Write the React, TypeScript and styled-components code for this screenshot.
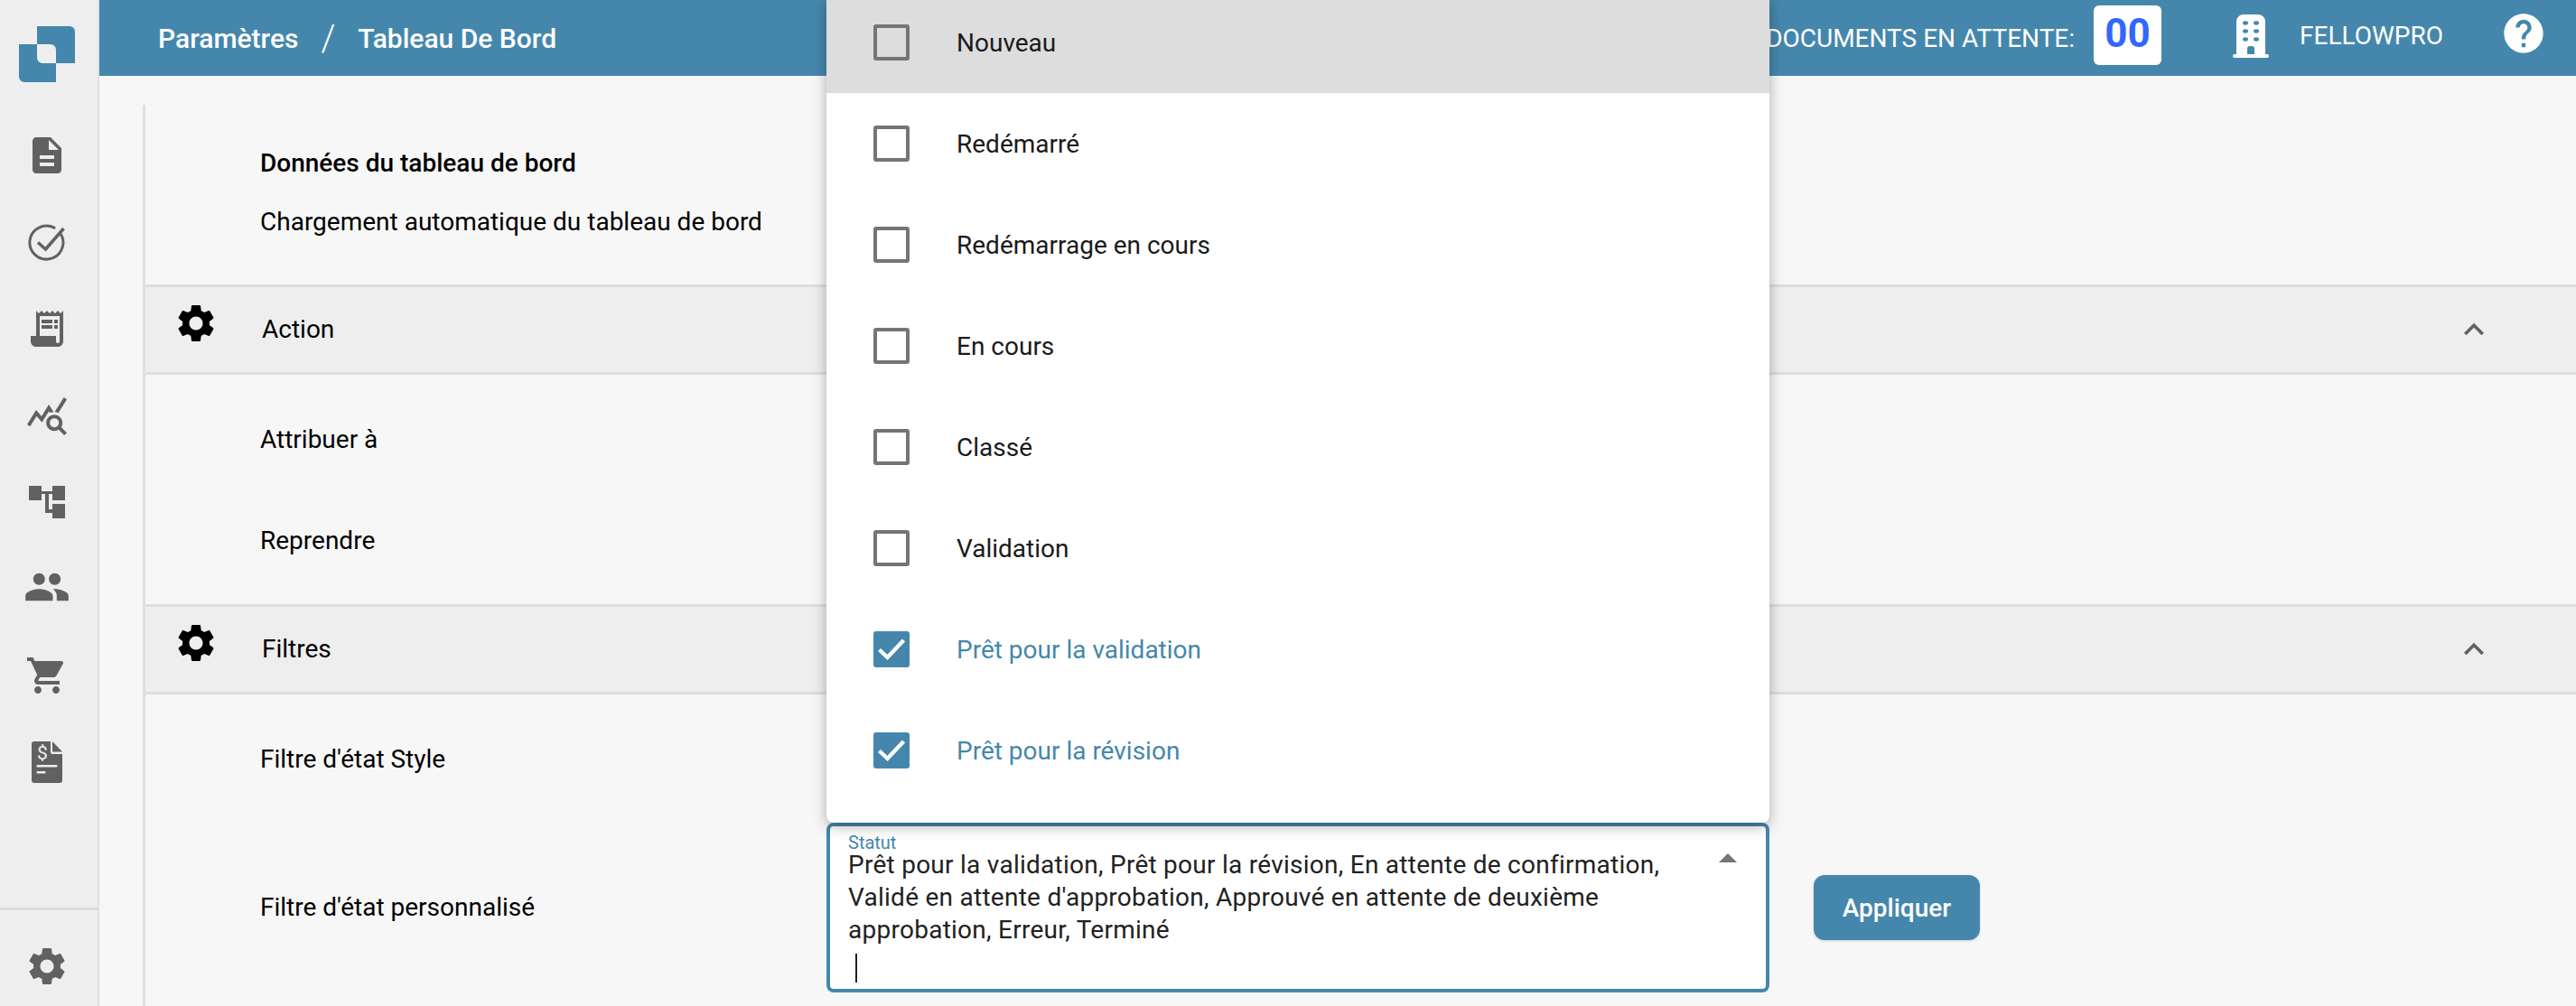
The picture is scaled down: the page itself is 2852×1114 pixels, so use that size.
import React from 'react';
import styled, {createGlobalStyle} from 'styled-components';
import {
    MdDescription,
    MdExpandLess,
    MdHelp,
    MdPeople,
    MdQueryStats,
    MdReceiptLong,
    MdSettings,
    MdShoppingCart,
} from 'react-icons/md';

const GlobalStyle = createGlobalStyle`
    html, body {
        margin: 0;
        padding: 0;
        height: 1114px;
        overflow: hidden;
        background: #f7f7f7;
        font-family: Roboto, "Liberation Sans", sans-serif;
    }
    * {
        box-sizing: border-box;
    }
`;

const Page = styled.div`
    display: flex;
    width: 2852px;
    height: 1114px;
    overflow: hidden;
`;

const Sidebar = styled.aside`
    flex: 0 0 110px;
    display: flex;
    flex-direction: column;
    align-items: center;
    background: #eeeeee;
    border-right: 2px solid #e0e0e0;
`;

const LogoSlot = styled.div`
    flex: 0 0 124px;
    display: flex;
    align-items: flex-start;
    padding-top: 29px;
    padding-right: 4px;
`;

const NavList = styled.nav`
    flex: 1;
    width: 100%;
    display: flex;
    flex-direction: column;
    align-items: center;
    color: #616161;
    padding-right: 4px;
`;

const NavItem = styled.div<{$nudge?: number}>`
    flex: 0 0 96px;
    display: flex;
    align-items: center;
    justify-content: center;
    width: 100%;
    padding-bottom: ${(p) => p.$nudge || 0}px;
`;

const SidebarFoot = styled.div`
    flex: 0 0 109px;
    width: 100%;
    border-top: 3px solid #dcdcdc;
    display: flex;
    align-items: center;
    justify-content: center;
    color: #616161;
    padding: 18px 4px 0 0;
`;

const Main = styled.div`
    flex: 1;
    display: flex;
    flex-direction: column;
    min-width: 0;
`;

const Header = styled.header`
    flex: 0 0 84px;
    display: flex;
    align-items: center;
    background: #4587ac;
    color: #fff;
    padding-left: 65px;
`;

const Crumbs = styled.div`
    display: flex;
    align-items: center;
    font-size: 30px;
    font-weight: 500;
`;

const CrumbSep = styled.span`
    margin: 0 25px;
    font-size: 40px;
    font-weight: 300;
`;

const HeaderRight = styled.div`
    margin-left: auto;
    display: flex;
    align-items: center;
    height: 100%;
`;

const PendingLabel = styled.span`
    font-size: 28px;
    margin-right: 21px;
`;

const PendingBadge = styled.div`
    width: 75px;
    height: 66px;
    margin-top: -6px;
    padding-bottom: 4px;
    background: #fff;
    border-radius: 6px;
    display: flex;
    align-items: center;
    justify-content: center;
    color: #3366ff;
    font-size: 44px;
    font-weight: 700;
`;

const Company = styled.span`
    font-size: 28px;
    margin: -6px 63px 0 34px;
`;

const BuildingSlot = styled.div`
    margin: -4px 0 0 79px;
    display: flex;
`;

const HelpSlot = styled.div`
    display: flex;
    margin-right: 32px;
    margin-top: -11px;
`;

const Content = styled.main`
    flex: 1;
    padding: 32px 0 0 48px;
    min-height: 0;
`;

const Panel = styled.div`
    height: 100%;
    border-left: 3px solid #dedede;
    display: flex;
    flex-direction: column;
`;

const IntroBlock = styled.div`
    flex: 0 0 199px;
    padding: 32px 0 0 127px;
`;

const IntroTitle = styled.div`
    font-size: 28px;
    font-weight: 500;
    line-height: 65px;
    color: #000;
`;

const IntroText = styled.div`
    font-size: 28px;
    line-height: 65px;
    color: #000;
`;

const SectionHead = styled.div`
    flex: 0 0 100px;
    background: #eeeeee;
    border-top: 3px solid #dedede;
    border-bottom: 3px solid #dedede;
    display: flex;
    align-items: center;
    padding: 0 91px 0 31px;
    font-size: 28px;
    color: #000;
`;

const GearSlot = styled.div`
    display: flex;
    margin-top: -14px;
`;

const SectionTitle = styled.span`
    margin-left: 48px;
    margin-top: -2px;
`;

const ChevronSlot = styled.div`
    margin-left: auto;
    display: flex;
    color: #616161;
`;

const RowGroup = styled.div`
    flex: none;
    padding: 15px 0 15px 127px;
    font-size: 28px;
    color: #000;
`;

const FilterRow = styled.div`
    display: flex;
    align-items: center;
    height: 112px;
`;

const CustomFilterRow = styled.div`
    flex: none;
    display: flex;
    align-items: center;
    padding: 0 0 0 127px;
    font-size: 28px;
    color: #000;
`;

const FilterLabel = styled.div`
    width: 627px;
    margin-top: -2px;
`;

const SelectWrap = styled.div`
    position: relative;
    width: 1044px;
`;

const SelectField = styled.div`
    position: relative;
    height: 188px;
    background: #fff;
    border: 4px solid #4587ac;
    border-radius: 8px;
    padding: 11px 60px 0 20px;
`;

const FieldLabel = styled.div`
    font-size: 20px;
    line-height: 14px;
    height: 14px;
    color: #4587ac;
`;

const FieldValue = styled.div`
    font-size: 28px;
    line-height: 36px;
    color: #212121;
    letter-spacing: 0.26px;
`;

const Caret = styled.div`
    width: 2px;
    height: 32px;
    background: #212121;
    margin: 8px 0 0 8px;
`;

const UpArrow = styled.div`
    position: absolute;
    top: 30px;
    right: 32px;
    width: 0;
    height: 0;
    border-left: 10px solid transparent;
    border-right: 10px solid transparent;
    border-bottom: 10px solid #757575;
`;

const Menu = styled.ul`
    position: absolute;
    z-index: 2;
    left: 0;
    right: 0;
    bottom: 100%;
    height: 912px;
    margin: 0;
    padding: 0;
    list-style: none;
    background: #fff;
    border-radius: 0 0 8px 8px;
    box-shadow: 0 4px 16px rgba(0, 0, 0, 0.3);
    overflow: hidden;
`;

const MenuItem = styled.li<{$hover?: boolean; $checked?: boolean}>`
    height: 112px;
    display: flex;
    align-items: center;
    padding-left: 52px;
    font-size: 28px;
    background: ${(p) => (p.$hover ? '#dddddd' : 'transparent')};
    color: ${(p) => (p.$checked ? '#4587ac' : '#1a1a1a')};
    &:first-child {
        height: 104px;
        padding-bottom: 8px;
    }
`;

const CheckBox = styled.span<{$checked?: boolean}>`
    flex: 0 0 40px;
    width: 40px;
    height: 40px;
    margin-right: 52px;
    border-radius: 3px;
    display: flex;
    align-items: center;
    justify-content: center;
    border: ${(p) => (p.$checked ? 'none' : '4px solid #757575')};
    background: ${(p) => (p.$checked ? '#4587ac' : 'transparent')};
`;

const ApplyButton = styled.button`
    margin-left: 49px;
    width: 184px;
    height: 72px;
    border: none;
    border-radius: 12px;
    background: #4587ac;
    color: #fff;
    font-family: inherit;
    font-size: 28px;
    font-weight: 500;
    box-shadow: 0 1px 3px rgba(0, 0, 0, 0.15);
`;

const Logo = () => (
    <svg width="62" height="62" viewBox="0 0 62 62">
        <path
            d="M20 0H56a6 6 0 0 1 6 6V41H41V26a6 6 0 0 0-6-6H20Z"
            fill="#4587ac"
        />
        <path
            d="M0 20H20V35a6 6 0 0 0 6 6H41V62H6a6 6 0 0 1-6-6Z"
            fill="#4587ac"
        />
    </svg>
);

const CheckCircleIcon = () => (
    <svg width="42" height="42" viewBox="0 0 42 42" fill="none" stroke="#616161">
        <path
            d="M36.8 13A18.5 18.5 0 1 1 29 5.2"
            strokeWidth="3"
            strokeLinecap="round"
        />
        <path d="M11 21.5l8.5 7.5L39.5 6" strokeWidth="3.6" />
    </svg>
);

const HierarchyIcon = () => (
    <svg width="40" height="36" viewBox="0 0 40 36" fill="#616161">
        <rect x="0" y="0" width="14" height="16" />
        <rect x="26" y="0" width="14" height="16" />
        <rect x="14" y="6" width="12" height="3" />
        <rect x="18" y="9" width="4" height="21" />
        <rect x="22" y="26" width="4" height="4" />
        <rect x="26" y="20" width="14" height="16" />
    </svg>
);

const InvoiceIcon = () => (
    <svg width="34" height="46" viewBox="0 0 34 46">
        <path
            d="M3 0H21V12a2 2 0 0 0 2 2H34V43a3 3 0 0 1-3 3H3a3 3 0 0 1-3-3V3a3 3 0 0 1 3-3Z"
            fill="#616161"
        />
        <path d="M23 0L34 11.5H23Z" fill="#616161" />
        <text
            x="12"
            y="20"
            fontFamily="Roboto, sans-serif"
            fontSize="21"
            textAnchor="middle"
            fill="#eeeeee"
        >
            $
        </text>
        <rect x="5.5" y="26" width="23" height="2.4" rx="1" fill="#eeeeee" />
        <rect x="5.5" y="33" width="10" height="2.4" rx="1" fill="#eeeeee" />
    </svg>
);

const BuildingIcon = () => (
    <svg width="40" height="48" viewBox="0 0 40 48">
        <path
            d="M4 8a8 8 0 0 1 8-8h16a8 8 0 0 1 8 8V44h2a2 2 0 0 1 0 4H2a2 2 0 0 1 0-4h2Z"
            fill="#fff"
        />
        <g fill="#4587ac">
            <ellipse cx="14" cy="9.5" rx="3" ry="2.2" />
            <ellipse cx="26" cy="9.5" rx="3" ry="2.2" />
            <ellipse cx="14" cy="18.5" rx="3" ry="2.2" />
            <ellipse cx="26" cy="18.5" rx="3" ry="2.2" />
            <ellipse cx="14" cy="27.5" rx="3" ry="2.2" />
            <ellipse cx="26" cy="27.5" rx="3" ry="2.2" />
            <path d="M16 44V38a3 3 0 0 1 3-3h2a3 3 0 0 1 3 3V44Z" />
        </g>
    </svg>
);

const TickIcon = () => (
    <svg width="32" height="28" viewBox="0 0 32 28" fill="none">
        <path d="M2.5 14.5l9 8.5L29.5 4" stroke="#fff" strokeWidth="4.4" />
    </svg>
);

const menuItems = [
    {label: 'Nouveau', hover: true},
    {label: 'Redémarré'},
    {label: 'Redémarrage en cours'},
    {label: 'En cours'},
    {label: 'Classé'},
    {label: 'Validation'},
    {label: 'Prêt pour la validation', checked: true},
    {label: 'Prêt pour la révision', checked: true},
];

const App = () => {
    return (
        <>
            <GlobalStyle />
            <Page>
                <Sidebar>
                    <LogoSlot>
                        <Logo />
                    </LogoSlot>
                    <NavList>
                        <NavItem>
                            <MdDescription size={48} />
                        </NavItem>
                        <NavItem>
                            <CheckCircleIcon />
                        </NavItem>
                        <NavItem>
                            <MdReceiptLong size={48} />
                        </NavItem>
                        <NavItem>
                            <MdQueryStats size={48} />
                        </NavItem>
                        <NavItem>
                            <HierarchyIcon />
                        </NavItem>
                        <NavItem $nudge={4}>
                            <MdPeople size={52} />
                        </NavItem>
                        <NavItem>
                            <MdShoppingCart size={48} />
                        </NavItem>
                        <NavItem>
                            <InvoiceIcon />
                        </NavItem>
                    </NavList>
                    <SidebarFoot>
                        <MdSettings size={50} />
                    </SidebarFoot>
                </Sidebar>
                <Main>
                    <Header>
                        <Crumbs>
                            Paramètres
                            <CrumbSep>/</CrumbSep>
                            Tableau De Bord
                        </Crumbs>
                        <HeaderRight>
                            <PendingLabel>DOCUMENTS EN ATTENTE:</PendingLabel>
                            <PendingBadge>00</PendingBadge>
                            <BuildingSlot>
                                <BuildingIcon />
                            </BuildingSlot>
                            <Company>FELLOWPRO</Company>
                            <HelpSlot>
                                <MdHelp size={52} />
                            </HelpSlot>
                        </HeaderRight>
                    </Header>
                    <Content>
                        <Panel>
                            <IntroBlock>
                                <IntroTitle>Données du tableau de bord</IntroTitle>
                                <IntroText>
                                    Chargement automatique du tableau de bord
                                </IntroText>
                            </IntroBlock>
                            <SectionHead>
                                <GearSlot>
                                    <MdSettings size={50} />
                                </GearSlot>
                                <SectionTitle>Action</SectionTitle>
                                <ChevronSlot>
                                    <MdExpandLess size={44} />
                                </ChevronSlot>
                            </SectionHead>
                            <RowGroup>
                                <FilterRow>Attribuer à</FilterRow>
                                <FilterRow>Reprendre</FilterRow>
                            </RowGroup>
                            <SectionHead>
                                <GearSlot>
                                    <MdSettings size={50} />
                                </GearSlot>
                                <SectionTitle>Filtres</SectionTitle>
                                <ChevronSlot>
                                    <MdExpandLess size={44} />
                                </ChevronSlot>
                            </SectionHead>
                            <RowGroup>
                                <FilterRow>Filtre d'état Style</FilterRow>
                            </RowGroup>
                            <CustomFilterRow>
                                <FilterLabel>Filtre d'état personnalisé</FilterLabel>
                                <SelectWrap>
                                    <Menu>
                                        {menuItems.map((item) => (
                                            <MenuItem
                                                key={item.label}
                                                $hover={item.hover}
                                                $checked={item.checked}
                                            >
                                                <CheckBox $checked={item.checked}>
                                                    {item.checked && <TickIcon />}
                                                </CheckBox>
                                                {item.label}
                                            </MenuItem>
                                        ))}
                                    </Menu>
                                    <SelectField>
                                        <FieldLabel>Statut</FieldLabel>
                                        <FieldValue>
                                            Prêt pour la validation, Prêt pour la
                                            révision, En attente de confirmation,
                                            Validé en attente d'approbation, Approuvé
                                            en attente de deuxième approbation,
                                            Erreur, Terminé
                                        </FieldValue>
                                        <Caret />
                                        <UpArrow />
                                    </SelectField>
                                </SelectWrap>
                                <ApplyButton>Appliquer</ApplyButton>
                            </CustomFilterRow>
                        </Panel>
                    </Content>
                </Main>
            </Page>
        </>
    );
};

export default App;
